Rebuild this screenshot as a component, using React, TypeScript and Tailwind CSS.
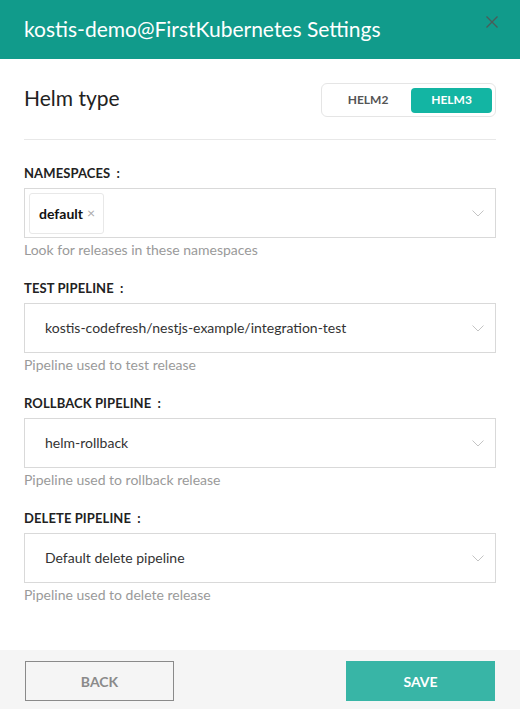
const FONT = { fontFamily: 'Lato, "Open Sans", sans-serif' }

function Chevron() {
  return (
    <svg width="12" height="7" viewBox="0 0 12 7" fill="none" className="shrink-0">
      <polyline points="0.5,0.5 6,6 11.5,0.5" stroke="#c4c4c4" strokeWidth="1" />
    </svg>
  )
}

interface FieldProps {
  label: string
  help: string
  value?: string
  tag?: string
}

function Field({ label, help, value, tag }: FieldProps) {
  return (
    <div className="flex flex-col">
      <div className="text-[13px] leading-[20px] font-bold text-[#222] tracking-[0.1px]">
        {label} <span className="ml-[3px]">:</span>
      </div>
      <div className="mt-[5px] h-[50px] border border-[#d9d9d9] flex items-center pr-[11px]">
        {tag ? (
          <div className="ml-[4px] h-[41px] pl-[9px] pr-[8px] border border-[#e8e8e8] rounded-[3px] flex items-center gap-[4px]">
            <span className="text-[14px] font-bold text-[#111]">{tag}</span>
            <span className="text-[14px] text-[#aaa] leading-none">×</span>
          </div>
        ) : (
          <span className="pl-[20px] text-[14px] leading-[20px] -mt-[1px] text-[#333]">{value}</span>
        )}
        <div className="flex-1" />
        <Chevron />
      </div>
      <div className="mt-[2px] text-[14px] leading-[20px] text-[#9a9a9a]">{help}</div>
    </div>
  )
}

export default function App() {
  return (
    <div className="w-[520px] h-[709px] bg-white flex flex-col" style={FONT}>
      {/* header */}
      <div className="h-[59px] bg-[#119b8b] flex items-start justify-between pl-[24px] pr-[22px]">
        <h1 className="text-[21px] leading-[57px] font-normal text-white">
          kostis-demo@FirstKubernetes Settings
        </h1>
        <svg width="12" height="12" viewBox="0 0 12 12" className="mt-[16px]">
          <path d="M0.5 0.5 L11.5 11.5 M11.5 0.5 L0.5 11.5" stroke="#4b5b58" strokeWidth="1.3" />
        </svg>
      </div>

      {/* body */}
      <div className="px-[24px] pt-[24px]">
        <div className="flex items-start justify-between h-[34px]">
          <h2 className="text-[21px] leading-[30px] text-[#222]">Helm type</h2>
          <div className="w-[175px] h-[34px] border border-[#e5e5e5] rounded-[6px] flex items-center p-[3px]">
            <button className="flex-1 h-[25px] text-[12px] font-bold text-[#555]">HELM2</button>
            <button className="w-[81px] h-[25px] rounded-[4px] bg-[#13b5a3] text-[12px] font-bold text-white">
              HELM3
            </button>
          </div>
        </div>
        <div className="mt-[22px] border-t border-[#e8e8e8]" />

        <div className="mt-[23px] flex flex-col gap-[18px]">
          <Field label="NAMESPACES" tag="default" help="Look for releases in these namespaces" />
          <Field
            label="TEST PIPELINE"
            value="kostis-codefresh/nestjs-example/integration-test"
            help="Pipeline used to test release"
          />
          <Field label="ROLLBACK PIPELINE" value="helm-rollback" help="Pipeline used to rollback release" />
          <Field label="DELETE PIPELINE" value="Default delete pipeline" help="Pipeline used to delete release" />
        </div>
      </div>

      {/* footer */}
      <div className="mt-auto h-[59px] bg-[#f5f5f5] flex items-start justify-between pl-[25px] pr-[25px] pt-[11px]">
        <button className="w-[149px] h-[40px] border-[1.5px] border-[#8a8a8a] text-[14px] font-bold text-[#8a8a8a]">
          BACK
        </button>
        <button className="w-[149px] h-[40px] bg-[#38b5a6] text-[14px] font-bold text-white">SAVE</button>
      </div>
    </div>
  )
}
